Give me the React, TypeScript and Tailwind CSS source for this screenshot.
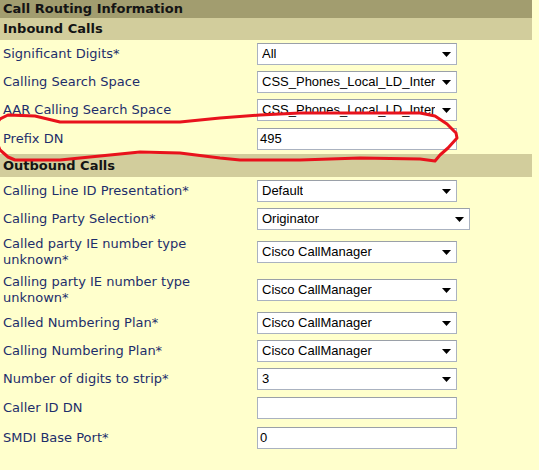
import React from 'react';

type Row = {
  label: string[];
  kind: 'select' | 'input';
  value: string;
  wide?: boolean;
};

const inbound: Row[] = [
  { label: ['Significant Digits*'], kind: 'select', value: 'All' },
  { label: ['Calling Search Space'], kind: 'select', value: 'CSS_Phones_Local_LD_Inter' },
  { label: ['AAR Calling Search Space'], kind: 'select', value: 'CSS_Phones_Local_LD_Inter' },
  { label: ['Prefix DN'], kind: 'input', value: '495' },
];

const outbound: Row[] = [
  { label: ['Calling Line ID Presentation*'], kind: 'select', value: 'Default' },
  { label: ['Calling Party Selection*'], kind: 'select', value: 'Originator', wide: true },
  { label: ['Called party IE number type', 'unknown*'], kind: 'select', value: 'Cisco CallManager' },
  { label: ['Calling party IE number type', 'unknown*'], kind: 'select', value: 'Cisco CallManager' },
  { label: ['Called Numbering Plan*'], kind: 'select', value: 'Cisco CallManager' },
  { label: ['Calling Numbering Plan*'], kind: 'select', value: 'Cisco CallManager' },
  { label: ['Number of digits to strip*'], kind: 'select', value: '3' },
  { label: ['Caller ID DN'], kind: 'input', value: '' },
  { label: ['SMDI Base Port*'], kind: 'input', value: '0' },
];

function Field({ row }: { row: Row }) {
  if (row.kind === 'input') {
    return (
      <div className="h-[22px] w-[200px] bg-white border border-[#aab2c0] border-t-[#9aa0a8] flex items-center pl-[2px] text-[13px] text-black font-['Liberation_Sans',Arial,sans-serif]">
        {row.value}
      </div>
    );
  }
  return (
    <div
      className={`h-[22px] ${row.wide ? 'w-[213px]' : 'w-[200px]'} bg-white border border-[#aab2c0] border-t-[#9aa0a8] flex items-center justify-between pl-[4px] pr-[5px] text-[13px] text-black font-['Liberation_Sans',Arial,sans-serif]`}
    >
      <span className="whitespace-nowrap overflow-hidden">{row.value}</span>
      <svg width="9" height="5" viewBox="0 0 9 5" className="shrink-0">
        <path d="M0 0h9L4.5 5z" fill="#000" />
      </svg>
    </div>
  );
}

function FormRow({ row }: { row: Row }) {
  return (
    <div className={`flex items-center ${row.kind === 'input' ? 'py-[4px]' : 'py-[3px]'}`}>
      <div className="w-[257px] pl-[3px] text-[13px] leading-[16px] text-[#1d2e6b]">
        {row.label.map((l) => (
          <div key={l}>{l}</div>
        ))}
      </div>
      <Field row={row} />
    </div>
  );
}

export default function App() {
  return (
    <div className="relative w-[539px] h-[470px] bg-[#ffffcc] overflow-hidden font-['DejaVu_Sans',Verdana,sans-serif]">
      <div className="w-[532px]">
        <div className="h-[18px] bg-[#a29d6f] pl-[3px] text-[13px] leading-[18px] font-bold text-[#141414]">
          Call Routing Information
        </div>
        <div className="h-[22px] bg-[#d2cd9c] pl-[3px] text-[13px] leading-[22px] font-bold text-[#141414]">
          Inbound Calls
        </div>
      </div>
      {inbound.map((r) => (
        <FormRow key={r.label.join()} row={r} />
      ))}
      <div className="w-[532px] h-[23px] bg-[#d2cd9c] pl-[3px] text-[13px] leading-[23px] font-bold text-[#141414]">
        Outbound Calls
      </div>
      {outbound.map((r) => (
        <FormRow key={r.label.join()} row={r} />
      ))}

      {/* red hand-drawn annotation */}
      <svg className="absolute left-0 top-0 pointer-events-none" width="539" height="470">
        <path
          d="M-4 124 L0 119 L8 115 L35 116 L60 122 L120 122 L180 122 L220 118 L260 115 L300 113 L360 113 L420 113 L435 116 L447 124 L456 133 L457 138 L448 148 L440 155 L435 161 L420 159 L360 158 L300 160 L240 160 L220 158 L180 153 L140 152 L100 156 L60 160 L15 160 L8 157 L0 150 L-4 140"
          fill="none"
          stroke="#e8121c"
          strokeWidth="3"
          strokeLinejoin="round"
        />
      </svg>
    </div>
  );
}
